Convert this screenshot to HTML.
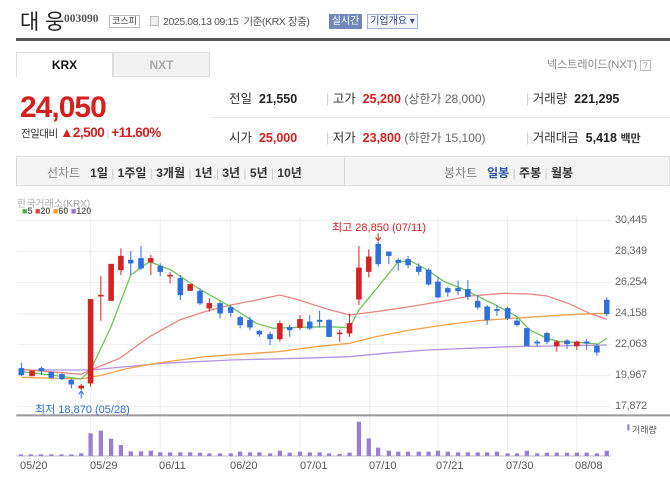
<!DOCTYPE html>
<html><head><meta charset="utf-8"><style>
*{margin:0;padding:0;box-sizing:border-box}
body{width:670px;height:477px;background:#fff;position:relative;overflow:hidden;font-family:"Liberation Sans","Noto Sans CJK KR",sans-serif;color:#333}
.a{position:absolute;white-space:nowrap}
.r{color:#d61f1f}
.b{font-weight:bold}
.g{color:#666}
.ax{position:absolute;left:615px;font-size:11px;color:#666;font-family:"Liberation Sans",sans-serif;letter-spacing:-0.3px}
.dt{position:absolute;top:460px;font-size:11px;color:#555}
</style></head><body>
<div class="a" style="left:20px;top:6px;font-size:21px;color:#222">대 웅</div>
<div class="a b" style="left:64px;top:13px;font-size:11.5px;color:#555;font-family:'Liberation Serif',serif">003090</div>
<div class="a" style="left:109px;top:15px;width:31px;height:13px;border:1px solid #bbb;font-size:9px;text-align:center;line-height:11px;color:#444">코스피</div>
<div class="a" style="left:150px;top:16px;width:9px;height:10px;border:1px solid #bbb;background:#eee"></div>
<div class="a" style="left:163px;top:14px;font-size:10.5px;color:#555;letter-spacing:-0.4px;width:160px;overflow:hidden">2025.08.13 09:15 &nbsp;기준(KRX 장중)</div>
<div class="a" style="left:329px;top:14px;width:33px;height:15px;background:#7288bd;color:#fff;font-size:10px;text-align:center;line-height:15px">실시간</div>
<div class="a" style="left:367px;top:14px;width:51px;height:15px;border:1px solid #9fb0d6;background:#f2f4fa;color:#3a4e8a;font-size:10px;text-align:center;line-height:13px">기업개요 ▾</div>
<div class="a" style="left:16px;top:38px;width:654px;height:3px;background:#555"></div>
<div class="a b" style="left:16px;top:52px;width:97px;height:25px;border:1px solid #ddd;border-bottom:none;text-align:center;font-size:12px;line-height:24px;color:#111">KRX</div>
<div class="a b" style="left:113px;top:52px;width:97px;height:25px;border:1px solid #ddd;background:#f2f2f2;text-align:center;font-size:12px;line-height:24px;color:#aaa">NXT</div>
<div class="a" style="left:547px;top:56px;font-size:11px;color:#888">넥스트레이드(NXT) <span style="border:1px solid #bbb;font-size:8px;padding:0 2px">?</span></div>
<div class="a r b" style="left:20px;top:91px;font-size:30px;letter-spacing:-1px;line-height:34px">24,050</div>
<div class="a" style="left:21px;top:125px;font-size:10.5px;color:#333;letter-spacing:-0.5px">전일대비 <span class="r b" style="font-size:13.5px">▲2,500</span> <span style="color:#ccc">|</span> <span class="r b" style="font-size:13.5px">+11.60%</span></div>
<div class="a" style="left:212px;top:117px;width:458px;height:1px;background:#e5e5e5"></div>
<div class="a" style="left:229px;top:88px;font-size:12.5px">전일 &nbsp;<span class="b" style="color:#222">21,550</span></div>
<div class="a" style="left:326px;top:88px;font-size:12.5px"><span style="color:#ccc">|</span> 고가 &nbsp;<span class="r b">25,200</span> <span class="g" style="font-size:12px">(상한가 28,000)</span></div>
<div class="a" style="left:526px;top:88px;font-size:12.5px"><span style="color:#ccc">|</span> 거래량 &nbsp;<span class="b" style="color:#222">221,295</span></div>
<div class="a" style="left:229px;top:127px;font-size:12.5px">시가 &nbsp;<span class="r b">25,000</span></div>
<div class="a" style="left:326px;top:127px;font-size:12.5px"><span style="color:#ccc">|</span> 저가 &nbsp;<span class="r b">23,800</span> <span class="g" style="font-size:12px">(하한가 15,100)</span></div>
<div class="a" style="left:526px;top:127px;font-size:12.5px"><span style="color:#ccc">|</span> 거래대금 &nbsp;<span class="b" style="color:#222">5,418</span> <span class="b" style="font-size:11px">백만</span></div>
<div class="a" style="left:16px;top:156px;width:654px;height:30px;background:#f4f4f4;border:1px solid #dcdcdc"></div>
<div class="a" style="left:344px;top:157px;width:1px;height:28px;background:#dcdcdc"></div>
<div class="a" style="left:47px;top:164px;font-size:12px;color:#333;word-spacing:0"><span style="color:#888">선차트</span> &nbsp; <b>1일</b> <span style="color:#ccc">|</span> <b>1주일</b> <span style="color:#ccc">|</span> <b>3개월</b> <span style="color:#ccc">|</span> <b>1년</b> <span style="color:#ccc">|</span> <b>3년</b> <span style="color:#ccc">|</span> <b>5년</b> <span style="color:#ccc">|</span> <b>10년</b></div>
<div class="a" style="left:444px;top:164px;font-size:12px;color:#333"><span style="color:#888">봉차트</span> &nbsp; <b style="color:#2f55a8">일봉</b> <span style="color:#ccc">|</span> <b>주봉</b> <span style="color:#ccc">|</span> <b>월봉</b></div>
<div class="a" style="left:17px;top:195px;font-size:10px;color:#aaa">한국거래소(KRX)</div>
<div class="a" style="left:22px;top:206px;font-size:9px;color:#666;font-weight:bold"><span style="color:#4caf50">■</span>5 <span style="color:#e04040">■</span>20 <span style="color:#f39a2a">■</span>60 <span style="color:#9a6cd0">■</span>120</div>
<svg class="a" style="left:0;top:190px" width="670" height="287" viewBox="0 0 1568 861" preserveAspectRatio="none">
<g stroke="#eee" stroke-width="1" vector-effect="non-scaling-stroke">
<line x1="40" y1="92" x2="1430" y2="92" vector-effect="non-scaling-stroke"/><line x1="40" y1="185" x2="1430" y2="185" vector-effect="non-scaling-stroke"/><line x1="40" y1="277" x2="1430" y2="277" vector-effect="non-scaling-stroke"/><line x1="40" y1="372" x2="1430" y2="372" vector-effect="non-scaling-stroke"/><line x1="40" y1="464" x2="1430" y2="464" vector-effect="non-scaling-stroke"/><line x1="40" y1="557" x2="1430" y2="557" vector-effect="non-scaling-stroke"/><line x1="40" y1="650" x2="1430" y2="650" vector-effect="non-scaling-stroke"/>
<line x1="212" y1="80" x2="212" y2="810" vector-effect="non-scaling-stroke"/><line x1="375" y1="80" x2="375" y2="810" vector-effect="non-scaling-stroke"/><line x1="540" y1="80" x2="540" y2="810" vector-effect="non-scaling-stroke"/><line x1="702" y1="80" x2="702" y2="810" vector-effect="non-scaling-stroke"/><line x1="865" y1="80" x2="865" y2="810" vector-effect="non-scaling-stroke"/><line x1="1025" y1="80" x2="1025" y2="810" vector-effect="non-scaling-stroke"/><line x1="1188" y1="80" x2="1188" y2="810" vector-effect="non-scaling-stroke"/><line x1="1350" y1="80" x2="1350" y2="810" vector-effect="non-scaling-stroke"/>
</g>
<line x1="38" y1="676" x2="1568" y2="676" stroke="#999" stroke-width="2" vector-effect="non-scaling-stroke"/>
<line x1="38" y1="798" x2="1430" y2="798" stroke="#bbb" stroke-width="1" vector-effect="non-scaling-stroke"/>
<g fill="none" stroke-width="1.3" vector-effect="non-scaling-stroke">
<polyline vector-effect="non-scaling-stroke" stroke="#b493e0" points="50,540 212,540 380,520 540,510 700,505 818,500 900,490 1000,480 1100,475 1190,470 1300,468 1420,465"/>
<polyline vector-effect="non-scaling-stroke" stroke="#f2a24a" points="50,562 190,567 240,555 300,535 380,517 480,500 560,493 650,485 740,470 818,460 880,440 960,420 1040,405 1120,392 1200,385 1280,378 1350,373 1420,370"/>
<polyline vector-effect="non-scaling-stroke" stroke="#e98585" points="50,538 190,553 212,540 280,505 350,440 420,390 480,365 540,345 600,330 655,315 700,330 760,355 818,375 880,365 960,350 1030,335 1100,318 1180,310 1240,312 1280,318 1330,340 1380,370 1420,388"/>
<polyline vector-effect="non-scaling-stroke" stroke="#72c35a" points="50,545 120,555 190,567 212,540 260,410 306,255 350,215 400,240 470,300 540,350 600,400 640,415 700,412 770,410 818,413 840,360 885,290 932,215 960,212 1000,240 1040,275 1080,295 1120,320 1160,345 1210,380 1240,420 1280,445 1310,455 1350,457 1400,462 1420,445"/>
</g>
<g stroke-width="1" vector-effect="non-scaling-stroke">
<g stroke="#2f6fdc" fill="#2f6fdc">
<line x1="50" y1="518" x2="50" y2="558" vector-effect="non-scaling-stroke"/><rect x="44" y="535" width="12" height="20"/>
<line x1="97" y1="530" x2="97" y2="555" vector-effect="non-scaling-stroke"/><rect x="91" y="535" width="12" height="8"/>
<line x1="120" y1="545" x2="120" y2="566" vector-effect="non-scaling-stroke"/><rect x="114" y="547" width="12" height="16"/>
<line x1="145" y1="550" x2="145" y2="570" vector-effect="non-scaling-stroke"/><rect x="139" y="553" width="12" height="14"/>
<line x1="167" y1="566" x2="167" y2="595" vector-effect="non-scaling-stroke"/><rect x="161" y="570" width="12" height="13"/>
<line x1="306" y1="183" x2="306" y2="255" vector-effect="non-scaling-stroke"/><rect x="300" y="210" width="12" height="10"/>
<line x1="330" y1="168" x2="330" y2="240" vector-effect="non-scaling-stroke"/><rect x="324" y="205" width="12" height="30"/>
<line x1="375" y1="220" x2="375" y2="258" vector-effect="non-scaling-stroke"/><rect x="369" y="228" width="12" height="17"/>
<line x1="422" y1="255" x2="422" y2="330" vector-effect="non-scaling-stroke"/><rect x="416" y="265" width="12" height="50"/>
<line x1="468" y1="295" x2="468" y2="345" vector-effect="non-scaling-stroke"/><rect x="462" y="303" width="12" height="37"/>
<line x1="515" y1="335" x2="515" y2="385" vector-effect="non-scaling-stroke"/><rect x="509" y="340" width="12" height="30"/>
<line x1="540" y1="345" x2="540" y2="380" vector-effect="non-scaling-stroke"/><rect x="534" y="352" width="12" height="16"/>
<line x1="562" y1="378" x2="562" y2="415" vector-effect="non-scaling-stroke"/><rect x="556" y="382" width="12" height="23"/>
<line x1="585" y1="380" x2="585" y2="420" vector-effect="non-scaling-stroke"/><rect x="579" y="390" width="12" height="22"/>
<line x1="607" y1="420" x2="607" y2="440" vector-effect="non-scaling-stroke"/><rect x="601" y="423" width="12" height="10"/>
<line x1="632" y1="425" x2="632" y2="465" vector-effect="non-scaling-stroke"/><rect x="626" y="433" width="12" height="14"/>
<line x1="678" y1="405" x2="678" y2="440" vector-effect="non-scaling-stroke"/><rect x="672" y="412" width="12" height="8"/>
<line x1="725" y1="375" x2="725" y2="420" vector-effect="non-scaling-stroke"/><rect x="719" y="395" width="12" height="20"/>
<line x1="748" y1="362" x2="748" y2="413" vector-effect="non-scaling-stroke"/><rect x="742" y="390" width="12" height="5"/>
<line x1="770" y1="388" x2="770" y2="442" vector-effect="non-scaling-stroke"/><rect x="764" y="390" width="12" height="50"/>
<line x1="885" y1="155" x2="885" y2="230" vector-effect="non-scaling-stroke"/><rect x="879" y="162" width="12" height="60"/>
<line x1="910" y1="185" x2="910" y2="222" vector-effect="non-scaling-stroke"/><rect x="904" y="185" width="12" height="12"/>
<line x1="932" y1="205" x2="932" y2="242" vector-effect="non-scaling-stroke"/><rect x="926" y="210" width="12" height="8"/>
<line x1="955" y1="198" x2="955" y2="235" vector-effect="non-scaling-stroke"/><rect x="949" y="208" width="12" height="17"/>
<line x1="980" y1="220" x2="980" y2="255" vector-effect="non-scaling-stroke"/><rect x="974" y="230" width="12" height="15"/>
<line x1="1003" y1="235" x2="1003" y2="287" vector-effect="non-scaling-stroke"/><rect x="997" y="240" width="12" height="43"/>
<line x1="1025" y1="260" x2="1025" y2="325" vector-effect="non-scaling-stroke"/><rect x="1019" y="275" width="12" height="47"/>
<line x1="1048" y1="290" x2="1048" y2="320" vector-effect="non-scaling-stroke"/><rect x="1042" y="295" width="12" height="12"/>
<line x1="1072" y1="272" x2="1072" y2="315" vector-effect="non-scaling-stroke"/><rect x="1066" y="295" width="12" height="8"/>
<line x1="1095" y1="270" x2="1095" y2="330" vector-effect="non-scaling-stroke"/><rect x="1089" y="298" width="12" height="22"/>
<line x1="1118" y1="315" x2="1118" y2="358" vector-effect="non-scaling-stroke"/><rect x="1112" y="333" width="12" height="19"/>
<line x1="1140" y1="345" x2="1140" y2="405" vector-effect="non-scaling-stroke"/><rect x="1134" y="350" width="12" height="40"/>
<line x1="1163" y1="345" x2="1163" y2="378" vector-effect="non-scaling-stroke"/><rect x="1157" y="358" width="12" height="4"/>
<line x1="1188" y1="350" x2="1188" y2="390" vector-effect="non-scaling-stroke"/><rect x="1182" y="355" width="12" height="30"/>
<line x1="1210" y1="385" x2="1210" y2="410" vector-effect="non-scaling-stroke"/><rect x="1204" y="392" width="12" height="13"/>
<rect x="1227" y="415" width="12" height="52"/>
<line x1="1257" y1="450" x2="1257" y2="470" vector-effect="non-scaling-stroke"/><rect x="1251" y="455" width="12" height="5"/>
<line x1="1280" y1="425" x2="1280" y2="462" vector-effect="non-scaling-stroke"/><rect x="1274" y="430" width="12" height="25"/>
<line x1="1327" y1="448" x2="1327" y2="477" vector-effect="non-scaling-stroke"/><rect x="1321" y="452" width="12" height="10"/>
<line x1="1373" y1="447" x2="1373" y2="480" vector-effect="non-scaling-stroke"/><rect x="1367" y="455" width="12" height="5"/>
<line x1="1397" y1="462" x2="1397" y2="497" vector-effect="non-scaling-stroke"/><rect x="1391" y="468" width="12" height="19"/>
<line x1="1420" y1="322" x2="1420" y2="378" vector-effect="non-scaling-stroke"/><rect x="1414" y="330" width="12" height="42"/>
</g>
<g stroke="#d62222" fill="#d62222">
<rect x="69" y="542" width="12" height="16"/>
<line x1="190" y1="582" x2="190" y2="600" vector-effect="non-scaling-stroke"/><rect x="184" y="587" width="12" height="8"/>
<line x1="212" y1="328" x2="212" y2="590" vector-effect="non-scaling-stroke"/><rect x="206" y="328" width="12" height="252"/>
<line x1="236" y1="258" x2="236" y2="392" vector-effect="non-scaling-stroke"/><rect x="230" y="315" width="12" height="4"/>
<rect x="254" y="222" width="12" height="110"/>
<line x1="283" y1="175" x2="283" y2="255" vector-effect="non-scaling-stroke"/><rect x="277" y="198" width="12" height="42"/>
<line x1="353" y1="195" x2="353" y2="255" vector-effect="non-scaling-stroke"/><rect x="347" y="205" width="12" height="12"/>
<line x1="398" y1="245" x2="398" y2="280" vector-effect="non-scaling-stroke"/><rect x="392" y="255" width="12" height="4"/>
<rect x="439" y="283" width="12" height="19"/>
<line x1="490" y1="325" x2="490" y2="365" vector-effect="non-scaling-stroke"/><rect x="484" y="340" width="12" height="15"/>
<line x1="655" y1="392" x2="655" y2="455" vector-effect="non-scaling-stroke"/><rect x="649" y="400" width="12" height="47"/>
<line x1="702" y1="375" x2="702" y2="420" vector-effect="non-scaling-stroke"/><rect x="696" y="388" width="12" height="25"/>
<line x1="795" y1="420" x2="795" y2="455" vector-effect="non-scaling-stroke"/><rect x="789" y="428" width="12" height="4"/>
<line x1="818" y1="370" x2="818" y2="440" vector-effect="non-scaling-stroke"/><rect x="812" y="400" width="12" height="30"/>
<line x1="840" y1="168" x2="840" y2="345" vector-effect="non-scaling-stroke"/><rect x="834" y="233" width="12" height="95"/>
<line x1="863" y1="178" x2="863" y2="262" vector-effect="non-scaling-stroke"/><rect x="857" y="200" width="12" height="45"/>
<line x1="1303" y1="450" x2="1303" y2="485" vector-effect="non-scaling-stroke"/><rect x="1297" y="455" width="12" height="13"/>
<line x1="1350" y1="452" x2="1350" y2="480" vector-effect="non-scaling-stroke"/><rect x="1344" y="455" width="12" height="13"/>
</g>
</g>
<g stroke="#d62222" fill="none" vector-effect="non-scaling-stroke"><line x1="885" y1="130" x2="885" y2="150" vector-effect="non-scaling-stroke"/><polyline points="879,142 885,152 891,142" vector-effect="non-scaling-stroke"/></g>
<g stroke="#2f6fdc" fill="none"><line x1="190" y1="605" x2="190" y2="625" vector-effect="non-scaling-stroke"/><polyline points="184,613 190,603 196,613" vector-effect="non-scaling-stroke"/></g>
<g fill="#9a7fd0">
<rect x="44" y="793" width="10" height="5"/><rect x="67" y="793" width="10" height="5"/><rect x="91" y="793" width="10" height="5"/><rect x="115" y="793" width="10" height="5"/><rect x="139" y="793" width="10" height="5"/><rect x="162" y="793" width="10" height="5"/><rect x="185" y="790" width="10" height="8"/>
<rect x="207" y="730" width="10" height="68"/><rect x="231" y="722" width="10" height="76"/><rect x="255" y="746" width="10" height="52"/><rect x="278" y="765" width="10" height="33"/>
<rect x="301" y="784" width="10" height="14"/><rect x="325" y="784" width="10" height="14"/><rect x="348" y="782" width="10" height="16"/><rect x="370" y="787" width="10" height="11"/><rect x="393" y="787" width="10" height="11"/><rect x="417" y="787" width="10" height="11"/><rect x="440" y="787" width="10" height="11"/><rect x="463" y="788" width="10" height="10"/><rect x="485" y="790" width="10" height="8"/><rect x="510" y="790" width="10" height="8"/><rect x="535" y="790" width="10" height="8"/><rect x="557" y="785" width="10" height="13"/><rect x="580" y="787" width="10" height="11"/><rect x="602" y="787" width="10" height="11"/><rect x="627" y="790" width="10" height="8"/><rect x="650" y="782" width="10" height="16"/><rect x="673" y="788" width="10" height="10"/><rect x="697" y="785" width="10" height="13"/><rect x="720" y="787" width="10" height="11"/><rect x="743" y="787" width="10" height="11"/><rect x="765" y="790" width="10" height="8"/><rect x="790" y="792" width="10" height="6"/><rect x="813" y="788" width="10" height="10"/>
<rect x="835" y="695" width="10" height="103"/><rect x="858" y="745" width="10" height="53"/><rect x="880" y="773" width="10" height="25"/>
<rect x="905" y="782" width="10" height="16"/><rect x="927" y="785" width="10" height="13"/><rect x="950" y="785" width="10" height="13"/><rect x="975" y="785" width="10" height="13"/><rect x="998" y="785" width="10" height="13"/><rect x="1020" y="782" width="10" height="16"/><rect x="1043" y="785" width="10" height="13"/><rect x="1067" y="787" width="10" height="11"/><rect x="1090" y="787" width="10" height="11"/><rect x="1113" y="787" width="10" height="11"/><rect x="1135" y="787" width="10" height="11"/><rect x="1158" y="785" width="10" height="13"/><rect x="1183" y="790" width="10" height="8"/><rect x="1205" y="790" width="10" height="8"/><rect x="1228" y="782" width="10" height="16"/><rect x="1252" y="790" width="10" height="8"/><rect x="1275" y="788" width="10" height="10"/><rect x="1298" y="788" width="10" height="10"/><rect x="1322" y="788" width="10" height="10"/><rect x="1345" y="788" width="10" height="10"/><rect x="1368" y="788" width="10" height="10"/><rect x="1392" y="790" width="10" height="8"/><rect x="1415" y="782" width="10" height="16"/>
<rect x="1468" y="703" width="5" height="18"/>
</g>
</svg>
<div class="ax" style="top:214px">30,445</div>
<div class="ax" style="top:245px">28,349</div>
<div class="ax" style="top:276px">26,254</div>
<div class="ax" style="top:307px">24,158</div>
<div class="ax" style="top:338px">22,063</div>
<div class="ax" style="top:369px">19,967</div>
<div class="ax" style="top:400px">17,872</div>
<div class="a" style="left:332px;top:219px;font-size:11px;color:#d62222">최고 28,850 (07/11)</div>
<div class="a" style="left:35px;top:401px;font-size:11px;color:#2f6fdc">최저 18,870 (05/28)</div>
<div class="a" style="left:632px;top:423px;font-size:9px;color:#555">거래량</div>
<div class="dt" style="left:20px">05/20</div>
<div class="dt" style="left:90px">05/29</div>
<div class="dt" style="left:159px">06/11</div>
<div class="dt" style="left:230px">06/20</div>
<div class="dt" style="left:300px">07/01</div>
<div class="dt" style="left:369px">07/10</div>
<div class="dt" style="left:436px">07/21</div>
<div class="dt" style="left:506px">07/30</div>
<div class="dt" style="left:575px">08/08</div>
</body></html>
